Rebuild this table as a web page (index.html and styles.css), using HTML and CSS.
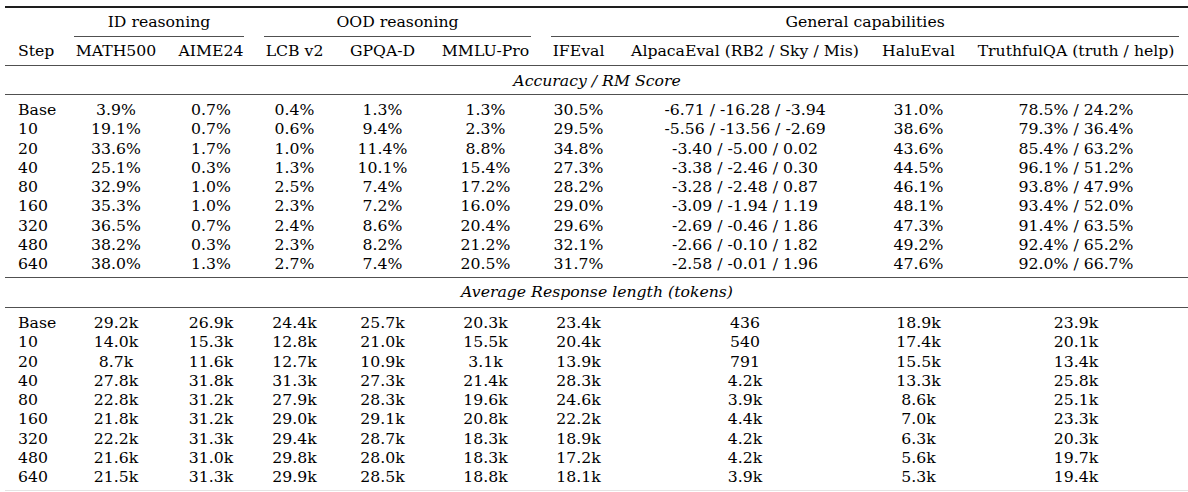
FILE: index.html
```html
<!DOCTYPE html>
<html lang="en">
<head>
<meta charset="utf-8">
<title>Results by training step</title>
<link rel="stylesheet" href="styles.css">
</head>
<body>
<table class="results">
  <colgroup>
    <col class="w-step"><col class="w-math"><col class="w-aime"><col class="w-lcb"><col class="w-gpqa"><col class="w-mmlu"><col class="w-if"><col class="w-alpaca"><col class="w-halu"><col class="w-truth">
  </colgroup>
  <thead>
    <tr class="groups">
      <th class="step"></th>
      <th colspan="2"><div class="cmid">ID reasoning</div></th>
      <th colspan="3"><div class="cmid">OOD reasoning</div></th>
      <th colspan="4"><div class="cmid">General capabilities</div></th>
    </tr>
    <tr class="cols">
      <th class="step">Step</th>
      <th>MATH500</th>
      <th>AIME24</th>
      <th>LCB v2</th>
      <th>GPQA-D</th>
      <th>MMLU-Pro</th>
      <th>IFEval</th>
      <th>AlpacaEval (RB2 / Sky / Mis)</th>
      <th>HaluEval</th>
      <th>TruthfulQA (truth / help)</th>
    </tr>
  </thead>
  <tbody>
    <tr class="label label-a"><td colspan="10">Accuracy / RM Score</td></tr>
    <tr class="first"><td class="step">Base</td><td>3.9%</td><td>0.7%</td><td>0.4%</td><td>1.3%</td><td>1.3%</td><td>30.5%</td><td>-6.71 / -16.28 / -3.94</td><td>31.0%</td><td>78.5% / 24.2%</td></tr>
    <tr><td class="step">10</td><td>19.1%</td><td>0.7%</td><td>0.6%</td><td>9.4%</td><td>2.3%</td><td>29.5%</td><td>-5.56 / -13.56 / -2.69</td><td>38.6%</td><td>79.3% / 36.4%</td></tr>
    <tr><td class="step">20</td><td>33.6%</td><td>1.7%</td><td>1.0%</td><td>11.4%</td><td>8.8%</td><td>34.8%</td><td>-3.40 / -5.00 / 0.02</td><td>43.6%</td><td>85.4% / 63.2%</td></tr>
    <tr><td class="step">40</td><td>25.1%</td><td>0.3%</td><td>1.3%</td><td>10.1%</td><td>15.4%</td><td>27.3%</td><td>-3.38 / -2.46 / 0.30</td><td>44.5%</td><td>96.1% / 51.2%</td></tr>
    <tr><td class="step">80</td><td>32.9%</td><td>1.0%</td><td>2.5%</td><td>7.4%</td><td>17.2%</td><td>28.2%</td><td>-3.28 / -2.48 / 0.87</td><td>46.1%</td><td>93.8% / 47.9%</td></tr>
    <tr><td class="step">160</td><td>35.3%</td><td>1.0%</td><td>2.3%</td><td>7.2%</td><td>16.0%</td><td>29.0%</td><td>-3.09 / -1.94 / 1.19</td><td>48.1%</td><td>93.4% / 52.0%</td></tr>
    <tr><td class="step">320</td><td>36.5%</td><td>0.7%</td><td>2.4%</td><td>8.6%</td><td>20.4%</td><td>29.6%</td><td>-2.69 / -0.46 / 1.86</td><td>47.3%</td><td>91.4% / 63.5%</td></tr>
    <tr><td class="step">480</td><td>38.2%</td><td>0.3%</td><td>2.3%</td><td>8.2%</td><td>21.2%</td><td>32.1%</td><td>-2.66 / -0.10 / 1.82</td><td>49.2%</td><td>92.4% / 65.2%</td></tr>
    <tr class="last"><td class="step">640</td><td>38.0%</td><td>1.3%</td><td>2.7%</td><td>7.4%</td><td>20.5%</td><td>31.7%</td><td>-2.58 / -0.01 / 1.96</td><td>47.6%</td><td>92.0% / 66.7%</td></tr>
    <tr class="label label-b"><td colspan="10">Average Response length (tokens)</td></tr>
    <tr class="first"><td class="step">Base</td><td>29.2k</td><td>26.9k</td><td>24.4k</td><td>25.7k</td><td>20.3k</td><td>23.4k</td><td>436</td><td>18.9k</td><td>23.9k</td></tr>
    <tr><td class="step">10</td><td>14.0k</td><td>15.3k</td><td>12.8k</td><td>21.0k</td><td>15.5k</td><td>20.4k</td><td>540</td><td>17.4k</td><td>20.1k</td></tr>
    <tr><td class="step">20</td><td>8.7k</td><td>11.6k</td><td>12.7k</td><td>10.9k</td><td>3.1k</td><td>13.9k</td><td>791</td><td>15.5k</td><td>13.4k</td></tr>
    <tr><td class="step">40</td><td>27.8k</td><td>31.8k</td><td>31.3k</td><td>27.3k</td><td>21.4k</td><td>28.3k</td><td>4.2k</td><td>13.3k</td><td>25.8k</td></tr>
    <tr><td class="step">80</td><td>22.8k</td><td>31.2k</td><td>27.9k</td><td>28.3k</td><td>19.6k</td><td>24.6k</td><td>3.9k</td><td>8.6k</td><td>25.1k</td></tr>
    <tr><td class="step">160</td><td>21.8k</td><td>31.2k</td><td>29.0k</td><td>29.1k</td><td>20.8k</td><td>22.2k</td><td>4.4k</td><td>7.0k</td><td>23.3k</td></tr>
    <tr><td class="step">320</td><td>22.2k</td><td>31.3k</td><td>29.4k</td><td>28.7k</td><td>18.3k</td><td>18.9k</td><td>4.2k</td><td>6.3k</td><td>20.3k</td></tr>
    <tr><td class="step">480</td><td>21.6k</td><td>31.0k</td><td>29.8k</td><td>28.0k</td><td>18.3k</td><td>17.2k</td><td>4.2k</td><td>5.6k</td><td>19.7k</td></tr>
    <tr class="last end"><td class="step">640</td><td>21.5k</td><td>31.3k</td><td>29.9k</td><td>28.5k</td><td>18.8k</td><td>18.1k</td><td>3.9k</td><td>5.3k</td><td>19.4k</td></tr>
  </tbody>
</table>
</body>
</html>
```
FILE: styles.css
```css
html, body {
  margin: 0;
  padding: 0;
  background: #ffffff;
  overflow: hidden;
}

.results {
  margin: 6px 0 0 5px;
  width: 1184px;
  table-layout: fixed;
  border-collapse: separate;
  border-spacing: 0;
  font-family: "DejaVu Serif", "Liberation Serif", serif;
  font-size: 15.7px;
  line-height: 19.3px;
  color: #000000;
}

.w-step { width: 59px; }
.w-math { width: 104px; }
.w-aime { width: 86px; }
.w-lcb { width: 81px; }
.w-gpqa { width: 95px; }
.w-mmlu { width: 111px; }
.w-if { width: 75px; }
.w-alpaca { width: 258px; }
.w-halu { width: 89px; }
.w-truth { width: 226px; }

.results th,
.results td {
  font-weight: normal;
  text-align: center;
  padding: 0;
  white-space: nowrap;
  vertical-align: top;
}

.results .step {
  text-align: left;
  padding-left: 13px;
}

.groups th {
  border-top: 2px solid #1e1e1e;
  padding-top: 4px;
}

.cmid {
  margin: 0 10px;
  padding-bottom: 4.7px;
  border-bottom: 1px solid #505050;
}

.cols th {
  padding-top: 4px;
  padding-bottom: 4.7px;
  border-bottom: 1px solid #505050;
}

.label td {
  font-style: italic;
  border-bottom: 1px solid #505050;
}

.label-a td {
  padding-top: 4.9px;
  padding-bottom: 3.8px;
}

.label-b td {
  padding-top: 4.4px;
  padding-bottom: 5.3px;
}

.first td {
  padding-top: 5px;
}

.last td {
  padding-bottom: 3.4px;
  border-bottom: 1px solid #505050;
}

.end td {
  padding-bottom: 3.2px;
  border-bottom: 1px solid #e4e4e4;
}
```
